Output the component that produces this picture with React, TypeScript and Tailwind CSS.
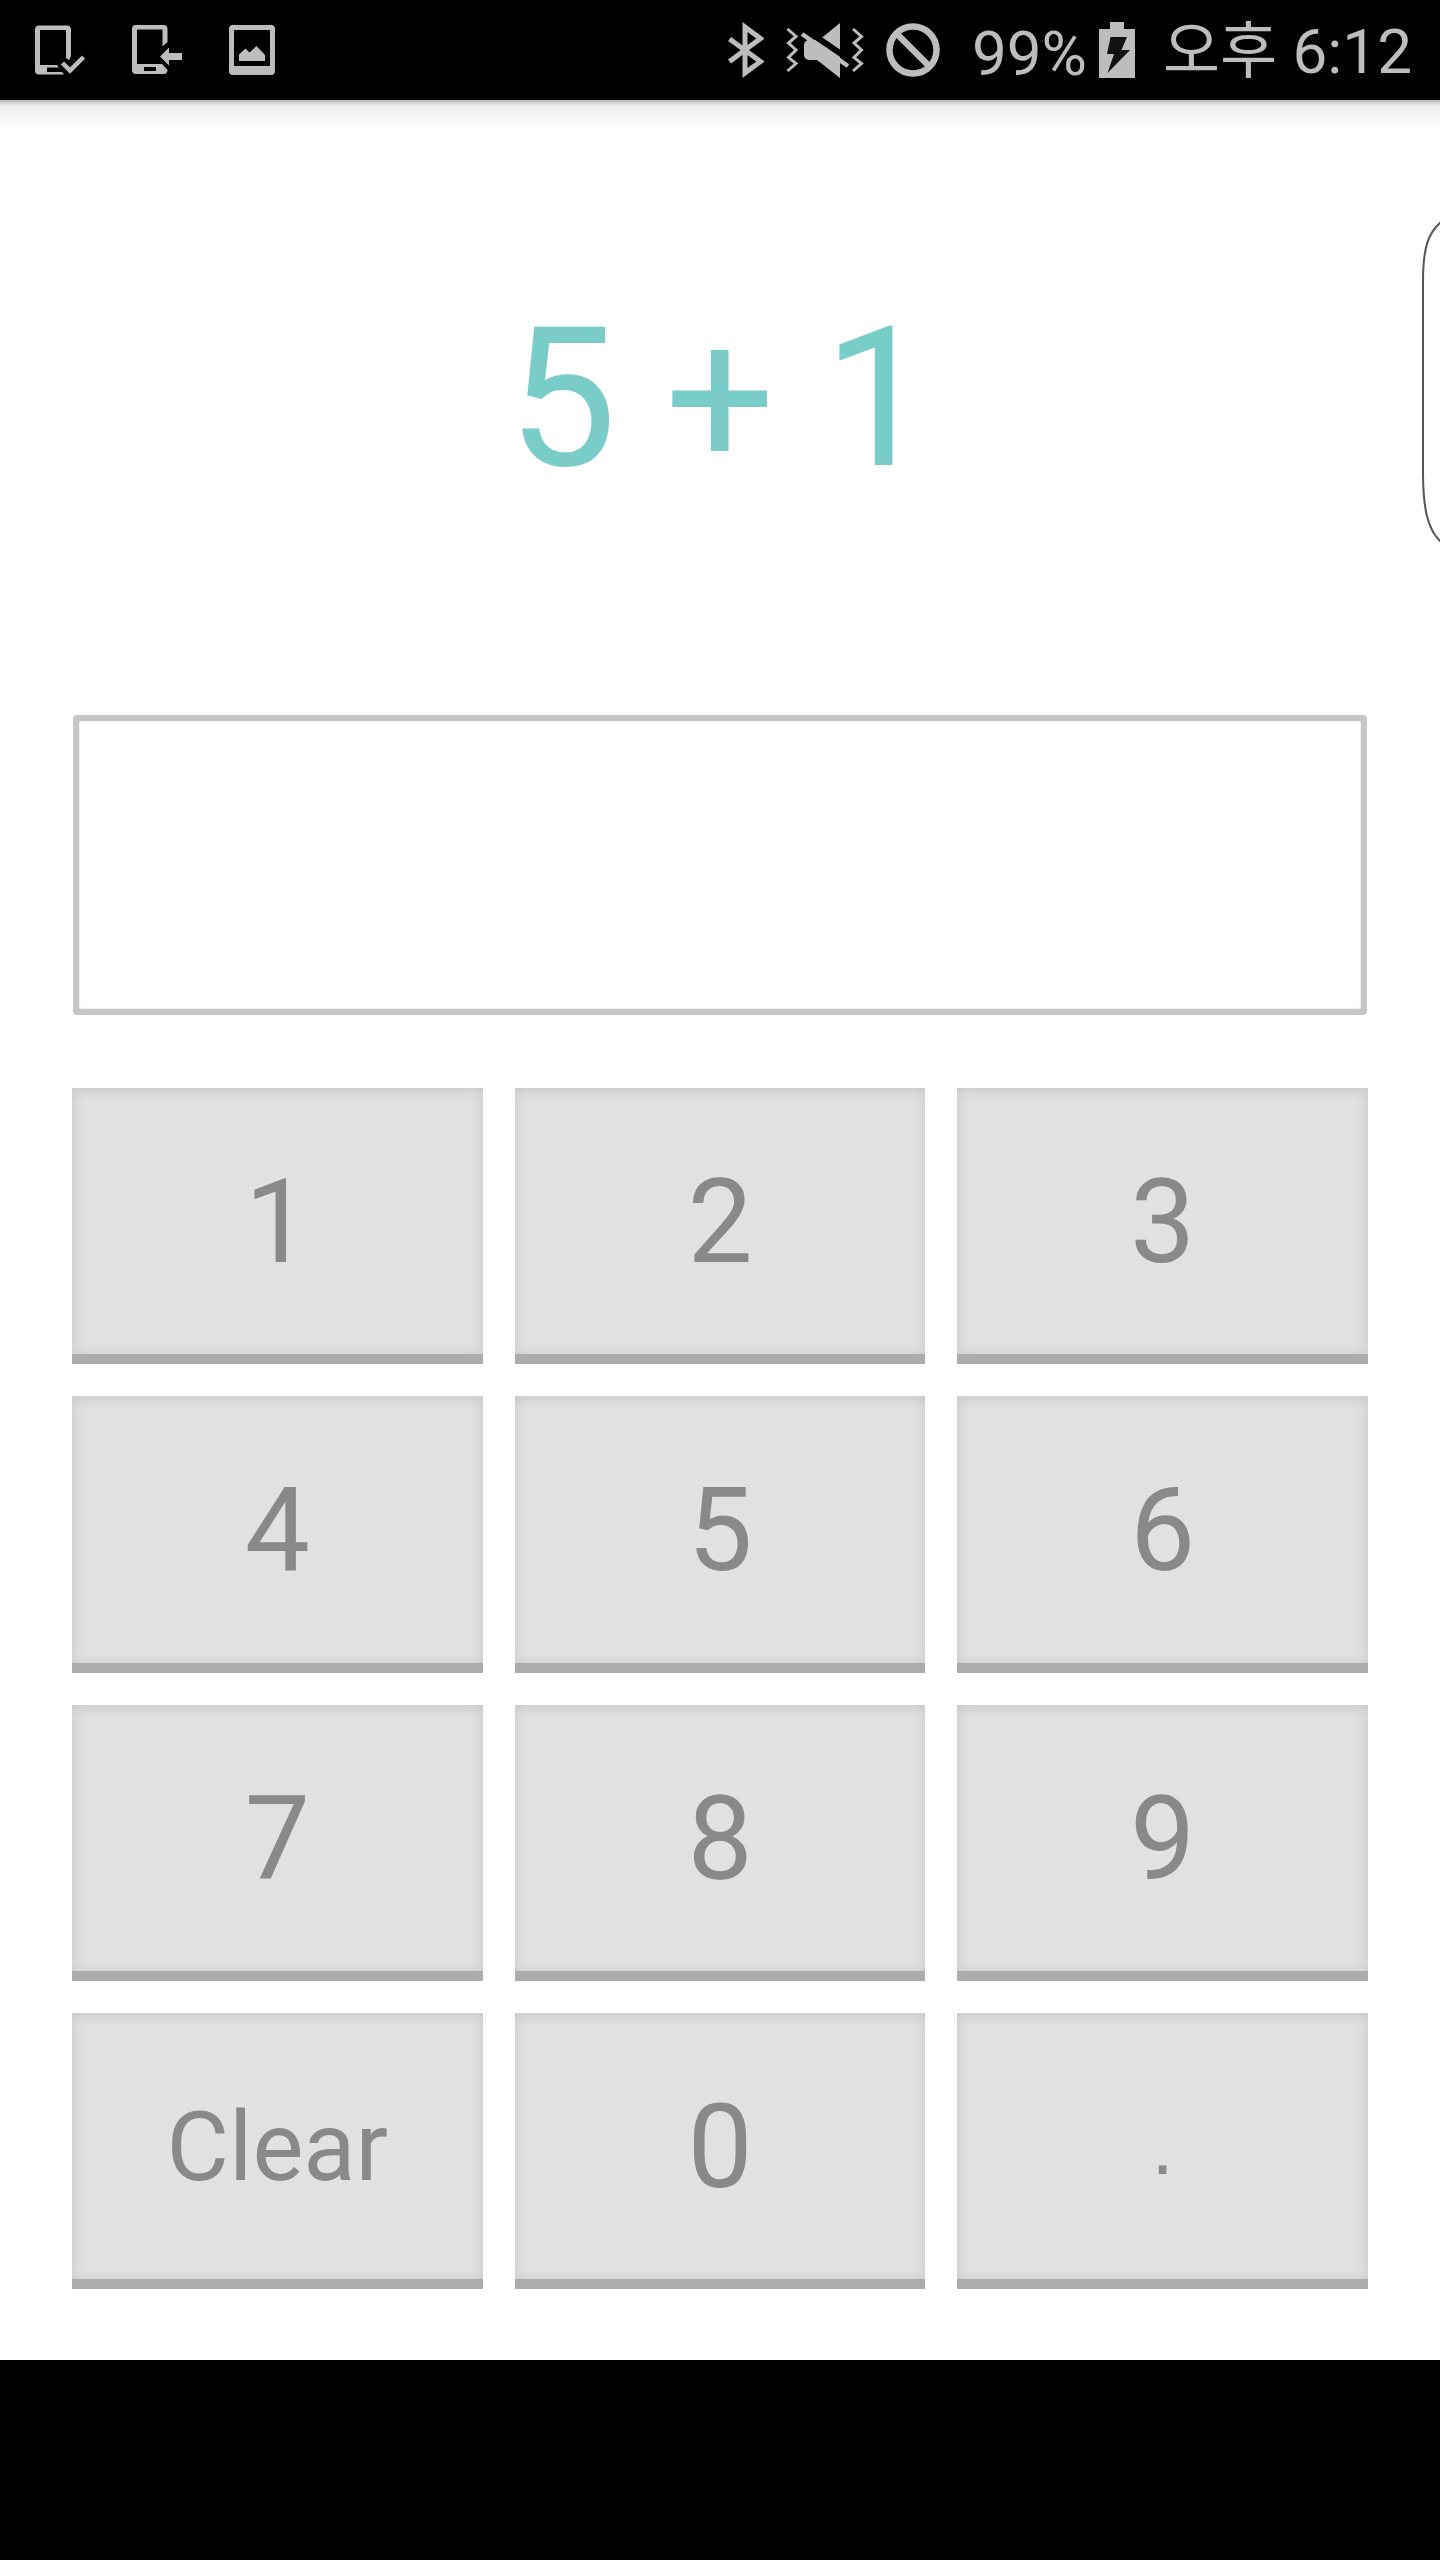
import { useState } from "react";

const KEYS = ["1", "2", "3", "4", "5", "6", "7", "8", "9", "Clear", "0", "."];

const DeviceCheckIcon = function () {
  return (
    <svg width="50" height="50" viewBox="0 0 50 50" fill="#bdbdbd">
      <path d="M4 0.5H32a4 4 0 0 1 4 4V31L34 35l-3-2V5H5V40H22L29 49.5H4a4 4 0 0 1-4-4V4.500a4 4 0 0 1 4-4z" />
      <path d="M12 42.500h12l4 4.500H12z" fill="#000" />
      <path d="M27.500 38L35 45.500L48.500 32" fill="none" stroke="#000" strokeWidth="9" />
      <path d="M27.500 38L35 45.500L48.500 32" fill="none" stroke="#bdbdbd" strokeWidth="4.500" />
    </svg>
  );
};

const DeviceArrowIcon = function () {
  return (
    <svg width="50" height="50" viewBox="0 0 50 50" fill="#bdbdbd">
      <path d="M4 0H31.500a4 4 0 0 1 4 4V17L30.500 21.500V4.500H5V39H30l5.500 6a4 4 0 0 1-4 4H4a4 4 0 0 1-4-4V4a4 4 0 0 1 4-4z" />
      <path d="M12 42h12v4H12z" fill="#000" />
      <path d="M28 31.500L37 22.500V28H50v7H37v5.500z" />
    </svg>
  );
};

const PictureIcon = function () {
  return (
    <svg width="46" height="50" viewBox="0 0 46 50" fill="#bdbdbd">
      <path
        fillRule="evenodd"
        d="M4 0H42a4 4 0 0 1 4 4V46a4 4 0 0 1-4 4H4a4 4 0 0 1-4-4V4a4 4 0 0 1 4-4zM5 5V41H41V5z"
      />
      <path d="M10 36V29.500L16.500 23.500L20.500 27.500L27.500 21L36 30V36z" />
    </svg>
  );
};

const BluetoothIcon = function () {
  return (
    <svg width="36" height="56" viewBox="0 0 36 56" fill="none" stroke="#bdbdbd" strokeWidth="5">
      <path d="M1.500 17L32.500 39.500L17 51V5L32.500 16.500L1.500 39.500" />
    </svg>
  );
};

const MuteVibrateIcon = function () {
  return (
    <svg width="78" height="56" viewBox="0 0 78 56" fill="#bdbdbd">
      <path d="M54 1V56L31 38H23a5 5 0 0 1-5-5V23a5 5 0 0 1 5-5h10z" />
      <path d="M17 6L64 38" stroke="#000" strokeWidth="6" />
      <path d="M16 12L62 44" stroke="#bdbdbd" strokeWidth="4.500" />
      <g fill="none" stroke="#bdbdbd" strokeWidth="3">
        <path d="M1.500 7L10 14.500L2.500 21L10 28L2.500 35.500L10 41.500L1.500 49" />
        <path d="M67 7L75.500 14.500L68 21L75.500 28L68 35.500L75.500 41.500L67 49" />
      </g>
    </svg>
  );
};

const BlockedIcon = function () {
  return (
    <svg width="54" height="54" viewBox="0 0 54 54" fill="none" stroke="#bdbdbd" strokeWidth="6.500">
      <circle cx="27" cy="27" r="23.500" />
      <path d="M11 11L43 43" />
    </svg>
  );
};

const BatteryIcon = function () {
  return (
    <svg width="36" height="56" viewBox="0 0 36 56">
      <path d="M11 0H25V7H36V56H0V7H11z" fill="#bdbdbd" />
      <path d="M11.500 15H28L22.500 28H31L8.500 51L15 32H8z" fill="#111" />
    </svg>
  );
};

const StatusBar = function () {
  return (
    <header className="flex h-[100px] items-center justify-between bg-black pl-[35px] pr-7 text-[62px] leading-none text-[#bdbdbd]">
      <div className="flex items-center gap-[47px]">
        <DeviceCheckIcon></DeviceCheckIcon>
        <DeviceArrowIcon></DeviceArrowIcon>
        <PictureIcon></PictureIcon>
      </div>
      <div className="flex items-center">
        <div className="mr-8 flex items-center gap-[22px]">
          <BluetoothIcon></BluetoothIcon>
          <MuteVibrateIcon></MuteVibrateIcon>
          <BlockedIcon></BlockedIcon>
        </div>
        <span className="mr-3 pt-2">99%</span>
        <BatteryIcon></BatteryIcon>
        <span className="ml-7 pt-1">오후 6:12</span>
      </div>
    </header>
  );
};

// handle of the edge panel, sits over the right side of the screen
const EdgeHandle = function () {
  return (
    <svg
      className="absolute right-0 top-[220px]"
      width="20"
      height="324"
      viewBox="0 0 20 324"
      fill="none"
      stroke="#555"
      strokeWidth="2"
    >
      <path d="M21 2C8 13 3 28 3 62V252C3 290 8 310 21 322" />
    </svg>
  );
};

const Key = function ({ label, onPress }: { label: string; onPress: (label: string) => void }) {
  let size = "text-[116px]";
  if (label === "Clear") size = "text-[96px]";
  if (label === ".") size = "text-[80px] font-['Liberation_Sans',sans-serif]";

  return (
    <button
      type="button"
      onClick={() => onPress(label)}
      className={`${size} flex items-center justify-center border-b-10 border-[#acacac] bg-[#e1e1e1] pt-0.5 leading-none text-[#898989] shadow-[inset_0_2px_14px_rgba(0,0,0,0.12)]`}
    >
      {label}
    </button>
  );
};

export default function App() {
  const [answer, setAnswer] = useState("");

  function press(label: string) {
    setAnswer(label === "Clear" ? "" : answer + label);
  }

  return (
    <div className="relative flex min-h-screen flex-col bg-white font-['Roboto','Noto_Sans_CJK_KR',sans-serif]">
      <StatusBar></StatusBar>
      <div className="h-7 bg-linear-to-b from-[#b8b8b8] via-[#ececec] via-20% to-white"></div>
      <EdgeHandle></EdgeHandle>

      <main className="flex flex-1 flex-col px-[72px] pb-[71px]">
        <h1 className="flex h-[586px] items-center justify-center pb-11 text-[194px] leading-none font-normal text-[#7accc8]">
          5 + 1
        </h1>
        <input
          type="text"
          aria-label="Answer"
          value={answer}
          readOnly
          className="m-px h-[300px] rounded-sm border-6 border-[#c6c6c6] bg-white text-center text-[116px] text-[#898989] shadow-[inset_0_0_2px_#c4c4c4] outline-none"
        />
        <div className="mt-[72px] grid flex-1 grid-cols-3 grid-rows-4 gap-8">
          {KEYS.map((k) => (
            <Key key={k} label={k} onPress={press}></Key>
          ))}
        </div>
      </main>

      <footer className="h-[200px] bg-black"></footer>
    </div>
  );
}
